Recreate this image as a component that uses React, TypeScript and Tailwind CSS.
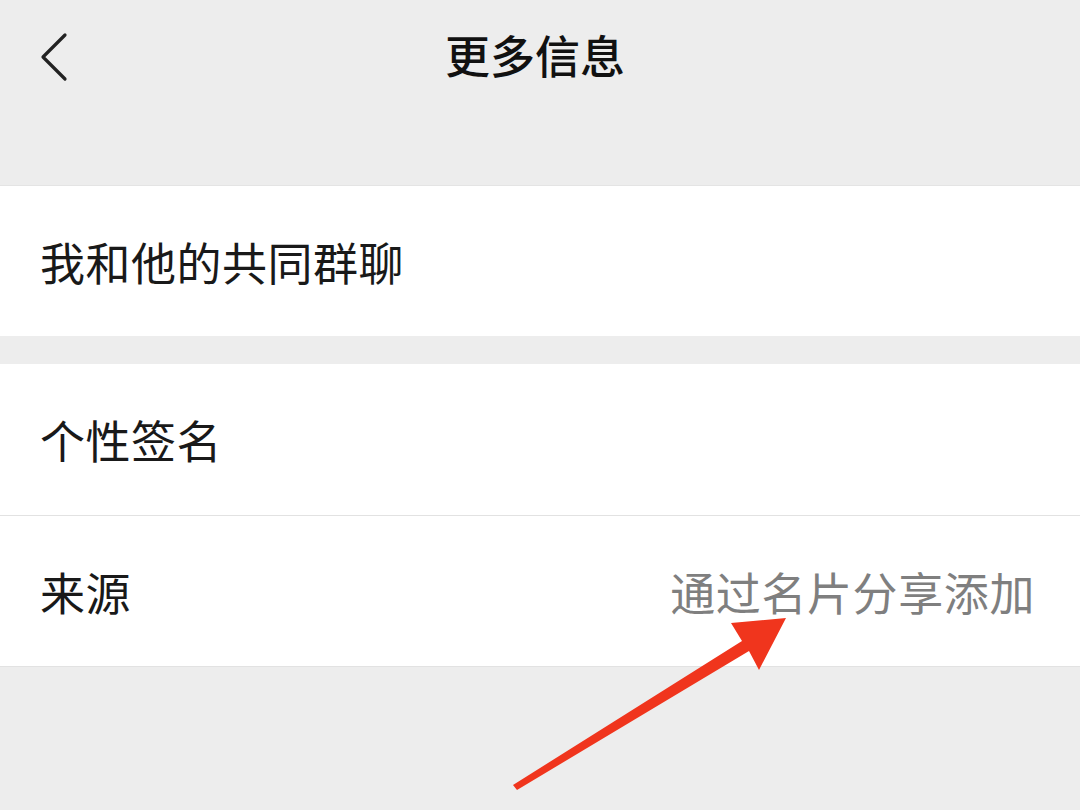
import React from "react";

export default function App() {
  const font = { fontFamily: '"Noto Sans CJK SC", "Noto Sans", sans-serif' };
  return (
    <div
      className="relative w-[1080px] h-[810px] overflow-hidden bg-[#ededed] flex flex-col"
      style={font}
    >
      <div className="relative h-[115px] flex items-center justify-center pr-[10px] pb-[6px] shrink-0">
        <svg
          className="absolute left-[36px] top-[32px]"
          width="34"
          height="50"
          viewBox="0 0 34 50"
        >
          <path d="M29 3 L7 25 L29 47" fill="none" stroke="#222" strokeWidth="3.2" strokeLinecap="round" strokeLinejoin="round" />
        </svg>
        <span className="text-[45px] font-medium text-[#111] leading-none">更多信息</span>
      </div>
      <div className="h-[70px] shrink-0" />
      <div className="h-[151px] bg-white border-t border-[#e4e4e4] flex items-center px-[40px] shrink-0">
        <span className="text-[45px] text-[#191919] leading-none tracking-[0.5px]">我和他的共同群聊</span>
      </div>
      <div className="h-[28px] shrink-0" />
      <div className="bg-white flex flex-col shrink-0 border-b border-[#e2e2e2]">
        <div className="h-[152px] flex items-center px-[40px] border-b border-[#e2e2e2]">
          <span className="text-[45px] text-[#191919] leading-none tracking-[0.5px]">个性签名</span>
        </div>
        <div className="h-[150px] flex items-center justify-between pl-[40px] pr-[45px]">
          <span className="text-[45px] text-[#191919] leading-none tracking-[0.5px]">来源</span>
          <span className="text-[45px] text-[#7f7f7f] leading-none tracking-[0.6px]">通过名片分享添加</span>
        </div>
      </div>
      <svg className="absolute left-0 top-0 pointer-events-none" width="1080" height="810">
        <polygon
          points="513,785 742,641 731,623 786,618 759,670 749,651 517,790"
          fill="#f0351d"
        />
      </svg>
    </div>
  );
}
